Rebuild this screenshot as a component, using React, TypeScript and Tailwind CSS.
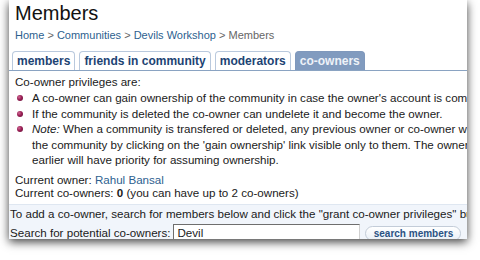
import React from "react";

const Bullet = () => (
  <span className="absolute left-[-15px] top-[5px] h-[6px] w-[6px] rounded-full bg-[radial-gradient(circle_at_35%_35%,#d06a95_0%,#9a1f55_45%,#5e0f33_100%)]" />
);

export default function App() {
  return (
    <div className="h-[260px] w-[480px] overflow-hidden bg-white" style={{ fontFamily: '"Liberation Sans", Arial, sans-serif' }}>
      <div className="ml-[9px] flex h-[239px] w-[458px] flex-col overflow-hidden bg-white text-[#1a1a1a] shadow-[0_3px_9px_rgba(0,0,0,0.75)]">
        <h1 className="whitespace-nowrap pl-[6px] pt-[1px] text-[20px] leading-[24px] text-[#111]">Members</h1>
        <div className="mt-[3px] whitespace-nowrap pl-[6px] text-[11px] leading-[14px] text-[#666]">
          <span className="text-[#2d5f8f]">Home</span> &gt; <span className="text-[#2d5f8f]">Communities</span> &gt;{" "}
          <span className="text-[#2d5f8f]">Devils Workshop</span> &gt; Members
        </div>
        <div className="mt-[9px] flex items-end gap-[4px] border-b border-[#8aa3c2] pl-[3px]">
          <div className="h-[19px] rounded-t-[4px] border border-b-0 border-[#b9c9dd] bg-white px-[4px] text-[12px] font-bold leading-[18px] text-[#1d4373]">members</div>
          <div className="h-[19px] rounded-t-[4px] border border-b-0 border-[#b9c9dd] bg-white px-[4px] text-[12px] font-bold leading-[18px] text-[#1d4373]">friends in community</div>
          <div className="h-[19px] rounded-t-[4px] border border-b-0 border-[#b9c9dd] bg-white px-[4px] text-[12px] font-bold leading-[18px] text-[#1d4373]">moderators</div>
          <div className="h-[19px] rounded-t-[4px] border border-b-0 border-[#7f98bc] bg-[#819bbf] px-[4px] text-[12px] font-bold leading-[18px] text-[#eef2f8]">co-owners</div>
        </div>
        <div className="whitespace-nowrap pl-[6px] pt-[3px] text-[11.6px]">
          <div className="leading-[16px]">Co-owner privileges are:</div>
          <ul className="pl-[17px] leading-[15.5px]">
            <li className="relative">
              <Bullet />A co-owner can gain ownership of the community in case the owner's account is compromised.
            </li>
            <li className="relative">
              <Bullet />If the community is deleted the co-owner can undelete it and become the owner.
            </li>
            <li className="relative">
              <Bullet />
              <i>Note:</i> When a community is transfered or deleted, any previous owner or co-owner with
              <br />
              the community by clicking on the 'gain ownership' link visible only to them. The owner
              <br />
              earlier will have priority for assuming ownership.
            </li>
          </ul>
          <div className="mt-[5px] leading-[13px]">
            Current owner: <span className="text-[#2d5f8f]">Rahul Bansal</span>
          </div>
          <div className="leading-[13px]">
            Current co-owners: <b>0</b> (you can have up to 2 co-owners)
          </div>
        </div>
        <div className="mt-[5px] flex-1 whitespace-nowrap border-t border-[#dfe7f1] bg-[#f1f5fb] pl-[1px] pt-[2px] text-[11.6px]">
          <div className="leading-[14px]">To add a co-owner, search for members below and click the "grant co-owner privileges" button.</div>
          <div className="mt-[3px] flex items-start">
            <span className="mt-[2px] leading-[14px]">Search for potential co-owners:</span>
            <div className="ml-[3px] h-[18px] w-[187px] border-b border-l border-r border-t border-[#6e6e6e] border-b-[#d0d0d0] border-r-[#d0d0d0] bg-white pl-[3px] leading-[16px]">Devil</div>
            <div className="ml-[5px] mt-[2px] flex h-[15px] w-[96px] items-center justify-center rounded-full border border-[#c3ccd8] bg-[linear-gradient(#ffffff,#eaf0f7)] text-[10px] font-bold text-[#2a5283]">
              search members
            </div>
          </div>
        </div>
      </div>
    </div>
  );
}
